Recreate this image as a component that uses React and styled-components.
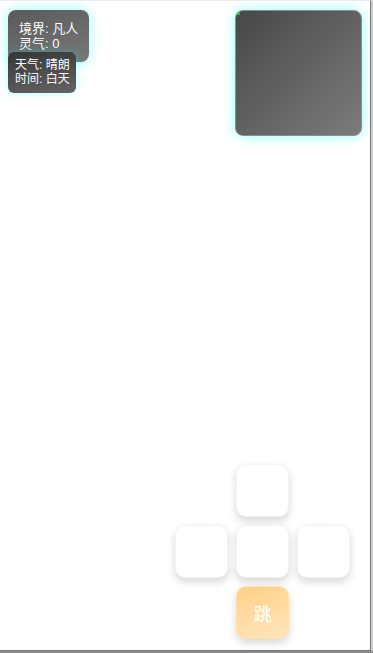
import React from 'react';
import styled, { createGlobalStyle } from 'styled-components';

const GlobalStyle = createGlobalStyle`
    html, body {
        margin: 0;
        padding: 0;
        background: #8a8a8a;
        font-family: "Liberation Sans", "Noto Sans CJK SC", sans-serif;
    }
`;

const Game = styled.div`
    box-sizing: border-box;
    width: 371px;
    height: 651px;
    background: #fff;
    border-top: 1px solid #ececec;
    border-right: 1px solid #777;
    border-bottom: 1px solid #777;
    box-shadow: 2px 0 0 #cdcdcd;
    padding: 8px;
    display: flex;
    flex-direction: column;
`;

const Hud = styled.div`
    display: flex;
    justify-content: space-between;
    align-items: flex-start;
`;

const StatusColumn = styled.div`
    display: flex;
    flex-direction: column;
    align-items: flex-start;
`;

const Panel = styled.div`
    position: relative;
    box-sizing: border-box;
    color: #fff;
    font-size: ${(p) => (p.small ? '12px' : '13px')};
    line-height: ${(p) => (p.small ? '14px' : '15px')};
    padding: ${(p) => (p.small ? '6px 6px 7px 7px' : '11px 11px')};
    border-radius: ${(p) => (p.small ? '6px' : '8px')};
    margin-top: ${(p) => (p.small ? '-10px' : '1px')};
    background: ${(p) =>
        p.small
            ? 'linear-gradient(170deg, #363636, #646464)'
            : 'linear-gradient(160deg, #5a5a5a, #787878)'};
    box-shadow: ${(p) =>
        p.small
            ? '0 0 8px rgba(0, 255, 255, 0.3)'
            : '0 0 12px rgba(0, 255, 255, 0.45)'};
    white-space: nowrap;
`;

const Minimap = styled.div`
    position: relative;
    width: 125px;
    height: 124px;
    margin-top: 1px;
    border: 1px solid #8c8c8c;
    border-radius: 8px;
    background: linear-gradient(135deg, #474747, #7c7c7c);
    box-shadow: 0 0 12px rgba(0, 255, 255, 0.45);
`;

const PlayerDot = styled.span`
    position: absolute;
    left: 1px;
    top: 1px;
    width: 3px;
    height: 3px;
    border-radius: 50%;
    background: #22e022;
`;

const Controls = styled.div`
    margin-top: auto;
    margin-right: 12px;
    margin-bottom: 3px;
    align-self: flex-end;
    display: grid;
    grid-template-columns: repeat(3, 53px);
    grid-auto-rows: 53px;
    gap: 8px;
`;

const Pad = styled.button`
    grid-column: ${(p) => p.col};
    grid-row: ${(p) => p.row};
    box-sizing: border-box;
    border: 1px solid ${(p) => (p.jump ? '#ffe2ad' : '#f4f4f4')};
    border-radius: 10px;
    background: ${(p) => (p.jump ? 'linear-gradient(160deg, #ffd086, #ffe6bd)' : '#fff')};
    box-shadow: 0 4px 8px rgba(0, 0, 0, 0.16);
    color: #fff;
    font-family: "Noto Sans CJK SC", sans-serif;
    font-size: 18px;
    padding: 0;
`;

export default function App() {
    return (
        <>
            <GlobalStyle />
            <Game>
                <Hud>
                    <StatusColumn>
                        <Panel>
                            <div>境界: 凡人</div>
                            <div>灵气: 0</div>
                        </Panel>
                        <Panel small>
                            <div>天气: 晴朗</div>
                            <div>时间: 白天</div>
                        </Panel>
                    </StatusColumn>
                    <Minimap>
                        <PlayerDot />
                    </Minimap>
                </Hud>
                <Controls>
                    <Pad col={2} row={1} />
                    <Pad col={1} row={2} />
                    <Pad col={2} row={2} />
                    <Pad col={3} row={2} />
                    <Pad col={2} row={3} jump>跳</Pad>
                </Controls>
            </Game>
        </>
    );
}
